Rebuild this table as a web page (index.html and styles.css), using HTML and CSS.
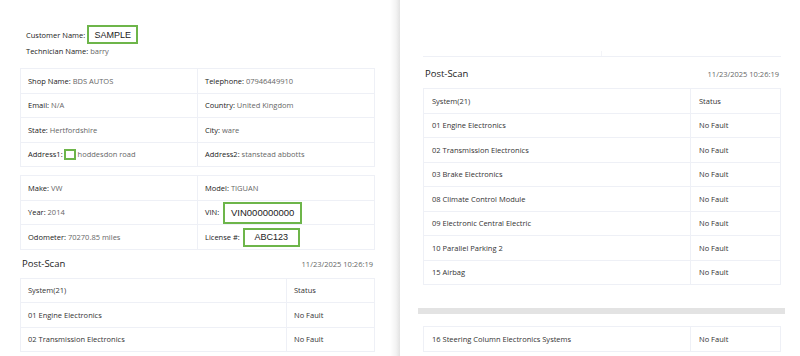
FILE: index.html
```html
<!DOCTYPE html>
<html lang="en">
<head>
    <meta charset="UTF-8">
    <title>Scan Report</title>
    <link rel="stylesheet" href="styles.css">
</head>
<body>
    <div class="page page-left">
        <div class="customer-row">
            <span class="label">Customer Name:</span>
            <span class="field field-name">SAMPLE</span>
        </div>
        <div class="tech-row">
            <span class="label">Technician Name:</span> <span class="value">barry</span>
        </div>

        <table class="info-table">
            <tr>
                <td><span class="label">Shop Name:</span> <span class="value">BDS AUTOS</span></td>
                <td><span class="label">Telephone:</span> <span class="value">07946449910</span></td>
            </tr>
            <tr>
                <td><span class="label">Email:</span> <span class="value">N/A</span></td>
                <td><span class="label">Country:</span> <span class="value">United Kingdom</span></td>
            </tr>
            <tr>
                <td><span class="label">State:</span> <span class="value">Hertfordshire</span></td>
                <td><span class="label">City:</span> <span class="value">ware</span></td>
            </tr>
            <tr>
                <td><span class="label">Address1:</span><span class="field field-empty"></span> <span class="value">hoddesdon road</span></td>
                <td><span class="label">Address2:</span> <span class="value">stanstead abbotts</span></td>
            </tr>
        </table>

        <table class="info-table vehicle-table">
            <tr>
                <td><span class="label">Make:</span> <span class="value">VW</span></td>
                <td><span class="label">Model:</span> <span class="value">TIGUAN</span></td>
            </tr>
            <tr>
                <td><span class="label">Year:</span> <span class="value">2014</span></td>
                <td class="field-cell"><span class="label">VIN:</span><span class="field field-vin">VIN000000000</span></td>
            </tr>
            <tr>
                <td><span class="label">Odometer:</span> <span class="value">70270.85 miles</span></td>
                <td class="field-cell"><span class="label">License #:</span><span class="field field-license">ABC123</span></td>
            </tr>
        </table>

        <div class="scan-head">
            <span class="scan-title">Post-Scan</span>
            <span class="scan-date">11/23/2025 10:26:19</span>
        </div>

        <table class="scan-table">
            <tr><td>System(21)</td><td class="status">Status</td></tr>
            <tr><td>01 Engine Electronics</td><td class="status">No Fault</td></tr>
            <tr><td>02 Transmission Electronics</td><td class="status">No Fault</td></tr>
        </table>
    </div>

    <div class="gutter"></div>

    <div class="page page-right">
        <div class="table-end"><span></span></div>

        <div class="scan-head">
            <span class="scan-title">Post-Scan</span>
            <span class="scan-date">11/23/2025 10:26:19</span>
        </div>

        <table class="scan-table">
            <tr><td>System(21)</td><td class="status">Status</td></tr>
            <tr><td>01 Engine Electronics</td><td class="status">No Fault</td></tr>
            <tr><td>02 Transmission Electronics</td><td class="status">No Fault</td></tr>
            <tr><td>03 Brake Electronics</td><td class="status">No Fault</td></tr>
            <tr><td>08 Climate Control Module</td><td class="status">No Fault</td></tr>
            <tr><td>09 Electronic Central Electric</td><td class="status">No Fault</td></tr>
            <tr><td>10 Parallel Parking 2</td><td class="status">No Fault</td></tr>
            <tr><td>15 Airbag</td><td class="status">No Fault</td></tr>
        </table>

        <div class="page-break"></div>

        <table class="scan-table">
            <tr><td>16 Steering Column Electronics Systems</td><td class="status">No Fault</td></tr>
        </table>
    </div>
</body>
</html>
```

FILE: styles.css
```css
* {
    margin: 0;
    padding: 0;
    box-sizing: border-box;
}

body {
    font-family: 'Open Sans', sans-serif;
    font-size: 7.5px;
    color: #333;
    background-color: #fff;
    display: flex;
    height: 356px;
    overflow: hidden;
}

.page {
    background-color: #fff;
    overflow: hidden;
}

.page-left {
    width: 390px;
    padding: 25px 15px 0 20px;
}

.gutter {
    width: 10px;
    background: linear-gradient(to right, #fff, #f3f3f3 60%, #e2e2e2);
}

.page-right {
    width: 400px;
    padding: 51px 19px 0 23px;
}

.label {
    color: #222;
}

.value {
    color: #666;
}

.customer-row {
    display: flex;
    align-items: center;
    height: 19px;
    padding-left: 6px;
}

.tech-row {
    padding-left: 6px;
    margin-top: 1px;
    line-height: 12px;
}

.field {
    display: inline-flex;
    align-items: center;
    justify-content: center;
    border: 2px solid #6db54a;
    font-family: 'Liberation Sans', Arial, sans-serif;
    font-size: 9px;
    color: #222;
    vertical-align: middle;
}

.field-name {
    width: 51px;
    height: 19px;
    margin-left: 2px;
}

.field-empty {
    width: 12px;
    height: 11px;
    margin-left: 1px;
}

.field-vin {
    width: 79px;
    height: 22px;
    margin-left: 4px;
    font-size: 9.5px;
}

.field-license {
    width: 57px;
    height: 19px;
    margin-left: 3px;
}

.info-table,
.scan-table {
    width: 100%;
    border-collapse: collapse;
}

.info-table {
    margin-top: 11px;
}

.vehicle-table {
    margin-top: 8px;
}

.info-table td,
.scan-table td {
    border: 1px solid #eef0f6;
    height: 24.5px;
    padding: 0 7px;
    vertical-align: middle;
}

.info-table td {
    width: 50%;
}

.info-table td.field-cell {
    padding-top: 1px;
}

.scan-table td {
    color: #333;
}

.scan-table td.status {
    width: 88px;
}

.page-right .scan-table td {
    padding: 0 8px;
}

.page-right .scan-table td.status {
    width: 90px;
}

.scan-head {
    display: flex;
    justify-content: space-between;
    align-items: flex-start;
    height: 28px;
    padding: 8px 2px 0;
    line-height: 12px;
}

.scan-title {
    font-size: 9.5px;
    color: #222;
}

.scan-date {
    color: #666;
}

.page-right .scan-head {
    height: 31px;
    padding-top: 11px;
}

.table-end {
    height: 6px;
    border-bottom: 1px solid #eef0f6;
    display: flex;
    justify-content: center;
}

.table-end span {
    width: 1px;
    margin-right: 1px;
    background-color: #f3f4f8;
}

.page-break {
    height: 6px;
    margin: 23px -4px 12px -5px;
    background-color: #e3e3e3;
}
```
